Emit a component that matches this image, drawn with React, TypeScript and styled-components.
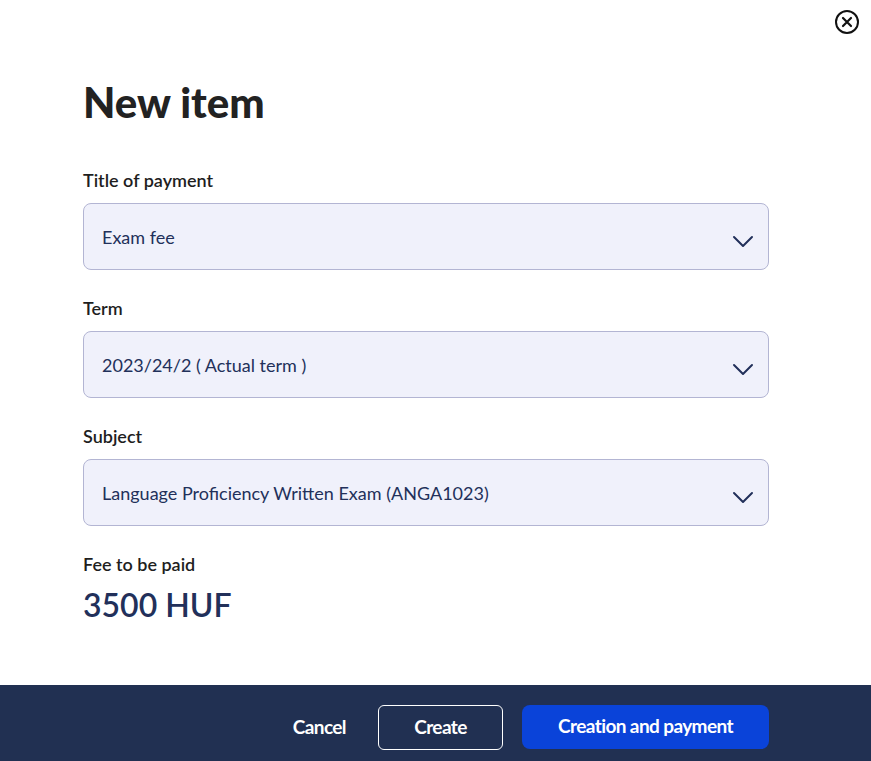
import styled, { createGlobalStyle } from 'styled-components';

const GlobalStyle = createGlobalStyle`
	html, body {
		margin: 0;
		padding: 0;
		background: #ffffff;
		overflow: hidden;
	}
	* {
		box-sizing: border-box;
	}
`;

type Field = {
	label: string;
	value: string;
};

const fields: Field[] = [
	{ label: 'Title of payment', value: 'Exam fee' },
	{ label: 'Term', value: '2023/24/2 ( Actual term )' },
	{ label: 'Subject', value: 'Language Proficiency Written Exam (ANGA1023)' },
];

const CloseIcon = () => (
	<svg width='26' height='26' viewBox='0 0 26 26' fill='none'>
		<circle cx='13' cy='13' r='11' stroke='#111' strokeWidth='2' />
		<path d='M9 9 L17 17 M17 9 L9 17' stroke='#111' strokeWidth='2.2' strokeLinecap='round' />
	</svg>
);

const Chevron = () => (
	<ChevronSvg width='22' height='13' viewBox='0 0 22 13' fill='none'>
		<path d='M2 2 L11 11 L20 2' stroke='#22305a' strokeWidth='2' strokeLinecap='round' strokeLinejoin='round' />
	</ChevronSvg>
);

const App = () => (
	<Page>
		<GlobalStyle />
		<TopBar>
			<CloseButton aria-label='Close'>
				<CloseIcon />
			</CloseButton>
		</TopBar>
		<Content>
			<Title>New item</Title>
			{fields.map((f) => (
				<FieldGroup key={f.label}>
					<Label>{f.label}</Label>
					<Select>
						<SelectText>{f.value}</SelectText>
						<Chevron />
					</Select>
				</FieldGroup>
			))}
			<Label>Fee to be paid</Label>
			<Amount>3500 HUF</Amount>
		</Content>
		<Footer>
			<TextButton>Cancel</TextButton>
			<OutlineButton>Create</OutlineButton>
			<PrimaryButton>Creation and payment</PrimaryButton>
		</Footer>
	</Page>
);

export default App;

// Styled Components
const Page = styled.div`
	display: flex;
	flex-direction: column;
	width: 100%;
	font-family: Lato, 'Liberation Sans', sans-serif;
`;

const TopBar = styled.div`
	display: flex;
	justify-content: flex-end;
	padding: 9px 11px 0 0;
	height: 77px;
`;

const CloseButton = styled.button`
	display: flex;
	align-items: center;
	justify-content: center;
	width: 26px;
	height: 26px;
	padding: 0;
	border: none;
	background: none;
	cursor: pointer;
`;

const Content = styled.div`
	display: flex;
	flex-direction: column;
	padding: 0 102px 0 83px;
`;

const Title = styled.h1`
	margin: 0 0 42px;
	font-size: 42px;
	line-height: 50px;
	font-weight: 900;
	color: #222222;
`;

const FieldGroup = styled.div`
	display: flex;
	flex-direction: column;
	margin-bottom: 27px;
`;

const Label = styled.div`
	font-size: 18px;
	line-height: 22px;
	font-weight: 600;
	color: #1e1e1e;
	margin-bottom: 12px;
`;

const Select = styled.div`
	display: flex;
	align-items: center;
	justify-content: space-between;
	height: 67px;
	padding: 2px 14px 0 18px;
	background: #f0f1fb;
	border: 1px solid #b3b5d3;
	border-radius: 8px;
	cursor: pointer;
`;

const SelectText = styled.span`
	font-size: 18px;
	color: #22305a;
	padding-bottom: 2px;
`;

const ChevronSvg = styled.svg`
	margin-top: 8px;
	flex-shrink: 0;
`;

const Amount = styled.div`
	font-size: 32px;
	line-height: 36px;
	font-weight: 600;
	color: #22305a;
	margin-bottom: 62px;
`;

const Footer = styled.div`
	display: flex;
	justify-content: flex-end;
	align-items: flex-start;
	gap: 19px;
	height: 100px;
	padding: 20px 102px 0 0;
	background: #213052;
`;

const BaseButton = styled.button`
	height: 45px;
	padding-bottom: 4px;
	font-family: Lato, 'Liberation Sans', sans-serif;
	font-size: 19px;
	font-weight: 700;
	letter-spacing: -0.6px;
	color: #ffffff;
	cursor: pointer;
`;

const TextButton = styled(BaseButton)`
	background: none;
	border: none;
	padding-left: 13px;
	padding-right: 13px;
`;

const OutlineButton = styled(BaseButton)`
	width: 125px;
	background: transparent;
	border: 1px solid #ffffff;
	border-radius: 6px;
`;

const PrimaryButton = styled(BaseButton)`
	width: 247px;
	height: 44px;
	background: #0a43d9;
	border: none;
	border-radius: 8px;
`;
